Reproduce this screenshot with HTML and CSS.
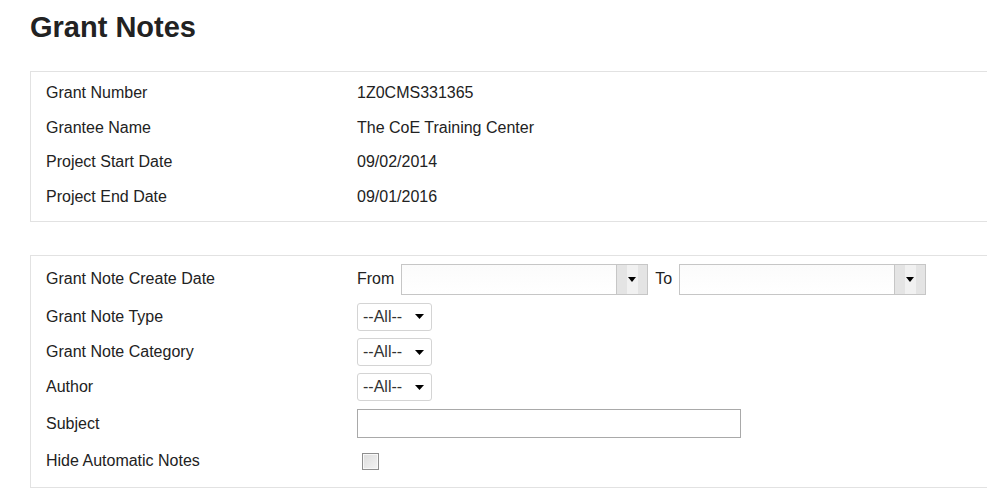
FILE: index.html
```html
<!DOCTYPE html>
<html lang="en">
<head>
<meta charset="utf-8">
<title>Grant Notes</title>
<link rel="stylesheet" href="styles.css">
</head>
<body>
<div class="page">
  <h1 class="title">Grant Notes</h1>

  <div class="panel info">
    <div class="label">Grant Number</div><div class="value">1Z0CMS331365</div>
    <div class="label">Grantee Name</div><div class="value">The CoE Training Center</div>
    <div class="label">Project Start Date</div><div class="value">09/02/2014</div>
    <div class="label">Project End Date</div><div class="value">09/01/2016</div>
  </div>

  <div class="panel filters">
    <div class="label">Grant Note Create Date</div>
    <div class="value date-range">
      <span class="range-word">From</span>
      <span class="datebox"><span class="date-field"></span><span class="date-btn"><span class="date-btn-inner"><svg width="8" height="5" viewBox="0 0 8 5"><path d="M0 0H8L4 5Z" fill="#000"/></svg></span></span></span>
      <span class="range-word">To</span>
      <span class="datebox"><span class="date-field"></span><span class="date-btn"><span class="date-btn-inner"><svg width="8" height="5" viewBox="0 0 8 5"><path d="M0 0H8L4 5Z" fill="#000"/></svg></span></span></span>
    </div>

    <div class="label">Grant Note Type</div>
    <div class="value"><span class="select">--All--<svg class="caret" width="9" height="5" viewBox="0 0 9 5"><path d="M0 0H9L4.5 5Z" fill="#000"/></svg></span></div>

    <div class="label">Grant Note Category</div>
    <div class="value"><span class="select">--All--<svg class="caret" width="9" height="5" viewBox="0 0 9 5"><path d="M0 0H9L4.5 5Z" fill="#000"/></svg></span></div>

    <div class="label">Author</div>
    <div class="value"><span class="select">--All--<svg class="caret" width="9" height="5" viewBox="0 0 9 5"><path d="M0 0H9L4.5 5Z" fill="#000"/></svg></span></div>

    <div class="label">Subject</div>
    <div class="value"><span class="textbox"></span></div>

    <div class="label">Hide Automatic Notes</div>
    <div class="value"><span class="checkbox"></span></div>
  </div>
</div>
</body>
</html>
```

FILE: styles.css
```css
html, body {
  margin: 0;
  padding: 0;
  overflow: hidden;
  background: #fff;
}

body {
  font-family: "Liberation Sans", Arial, sans-serif;
  font-size: 16px;
  color: #222;
}

.page {
  padding-left: 30px;
}

.title {
  margin: 11px 0 28px 0;
  font-size: 29px;
  line-height: 32px;
  font-weight: bold;
  color: #222;
}

.panel {
  width: 1000px;
  border: 1px solid #e2e2e2;
  box-sizing: border-box;
  display: grid;
  grid-template-columns: 311px 1fr;
  padding-left: 15px;
}

.label, .value {
  display: flex;
  align-items: center;
}

.info {
  grid-template-rows: repeat(4, 34.5px);
  padding-top: 4px;
  padding-bottom: 7px;
  margin-bottom: 33px;
}

.filters {
  grid-template-rows: 38px 37px 34px 36px 37px 38px;
  padding-top: 4px;
  padding-bottom: 7px;
}

.date-range {
  gap: 7px;
}

.range-word {
  display: inline-block;
}

.datebox {
  display: flex;
  height: 31px;
  width: 247px;
  border: 1px solid #c6c6c6;
  box-sizing: border-box;
  background: linear-gradient(#fbfbfb, #ffffff);
}

.date-field {
  flex: 1;
}

.date-btn {
  width: 30px;
  border-left: 1px solid #c6c6c6;
  background: #e4e4e4;
  display: flex;
  justify-content: center;
}

.date-btn-inner {
  width: 11px;
  background: #f1f1f1;
  display: flex;
  align-items: center;
  justify-content: center;
}

.select {
  display: inline-flex;
  align-items: center;
  justify-content: space-between;
  box-sizing: border-box;
  width: 75px;
  height: 28px;
  padding: 0 7px 0 5px;
  border: 1px solid #d4d4d4;
  border-radius: 3px;
  background: #fff;
  color: #333;
}

.textbox {
  display: inline-block;
  box-sizing: border-box;
  width: 384px;
  height: 29px;
  border: 1px solid #a9a9a9;
  background: #fff;
}

.checkbox {
  display: inline-block;
  box-sizing: border-box;
  width: 17px;
  height: 17px;
  margin-left: 5px;
  border: 1px solid #8f8f8f;
  background: linear-gradient(135deg, #dcdcdc, #f4f4f4);
  box-shadow: inset 0 0 0 1px #f8f8f8;
}
```
